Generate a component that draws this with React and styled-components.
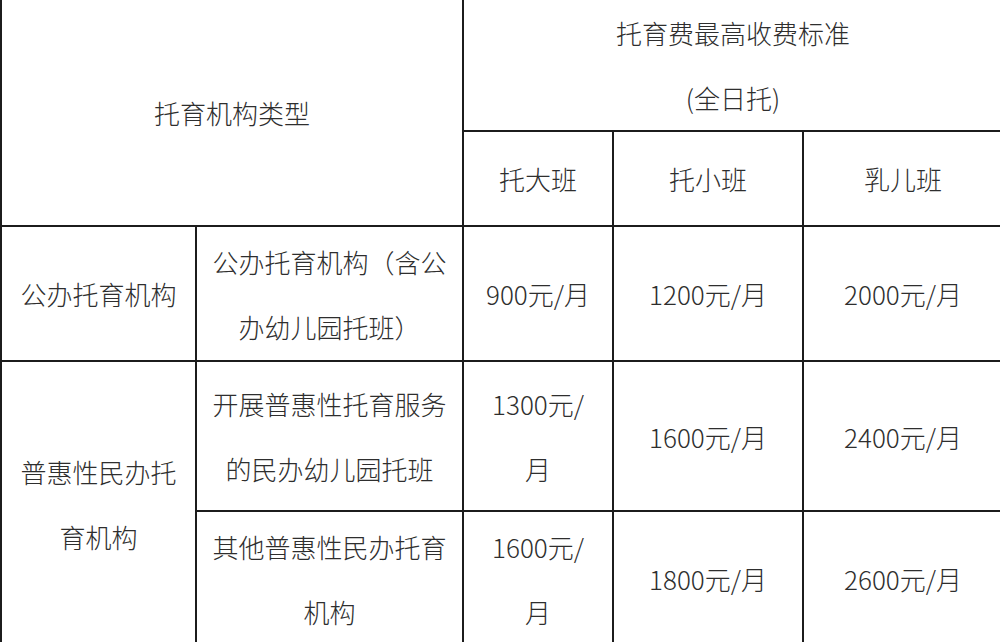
import React from "react";
import styled, { createGlobalStyle } from "styled-components";

const Global = createGlobalStyle`
  html, body { margin: 0; padding: 0; background: #fff; }
  body { overflow: hidden; }
`;

const Page = styled.div`
  width: 1000px;
  height: 642px;
  overflow: hidden;
  background: #fff;
`;

const Table = styled.table`
  width: 1002px;
  margin-top: -2px;
  border-collapse: collapse;
  table-layout: fixed;
  font-family: "Noto Sans CJK SC", "Microsoft YaHei", sans-serif;
  font-size: 26px;
  font-weight: 300;
  color: #2e2e2e;
`;

const Col = styled.col`
  width: ${(p) => p.$w}px;
`;

const Row = styled.tr`
  height: ${(p) => p.$h}px;
`;

const Cell = styled.td`
  border: 2px solid #1c1c1c;
  padding: 0 ${(p) => p.$pad ?? 12}px;
  text-align: center;
  vertical-align: middle;
  line-height: 65px;
`;

export default function App() {
  return (
    <Page>
      <Global />
      <Table>
        <colgroup>
          <Col $w={195} />
          <Col $w={267} />
          <Col $w={150} />
          <Col $w={190} />
          <Col $w={200} />
        </colgroup>
        <tbody>
          <Row $h={132}>
            <Cell colSpan={2} rowSpan={2}>托育机构类型</Cell>
            <Cell colSpan={3}>
              托育费最高收费标准
              <br />
              (全日托)
            </Cell>
          </Row>
          <Row $h={95}>
            <Cell $pad={18}>托大班</Cell>
            <Cell>托小班</Cell>
            <Cell>乳儿班</Cell>
          </Row>
          <Row $h={135}>
            <Cell>公办托育机构</Cell>
            <Cell $pad={10}>公办托育机构（含公办幼儿园托班）</Cell>
            <Cell $pad={18}>900元/月</Cell>
            <Cell>1200元/月</Cell>
            <Cell>2000元/月</Cell>
          </Row>
          <Row $h={150}>
            <Cell rowSpan={2}>普惠性民办托育机构</Cell>
            <Cell $pad={10}>开展普惠性托育服务的民办幼儿园托班</Cell>
            <Cell $pad={18}>1300元/月</Cell>
            <Cell>1600元/月</Cell>
            <Cell>2400元/月</Cell>
          </Row>
          <Row $h={135}>
            <Cell $pad={10}>其他普惠性民办托育机构</Cell>
            <Cell $pad={18}>1600元/月</Cell>
            <Cell>1800元/月</Cell>
            <Cell>2600元/月</Cell>
          </Row>
        </tbody>
      </Table>
    </Page>
  );
}
